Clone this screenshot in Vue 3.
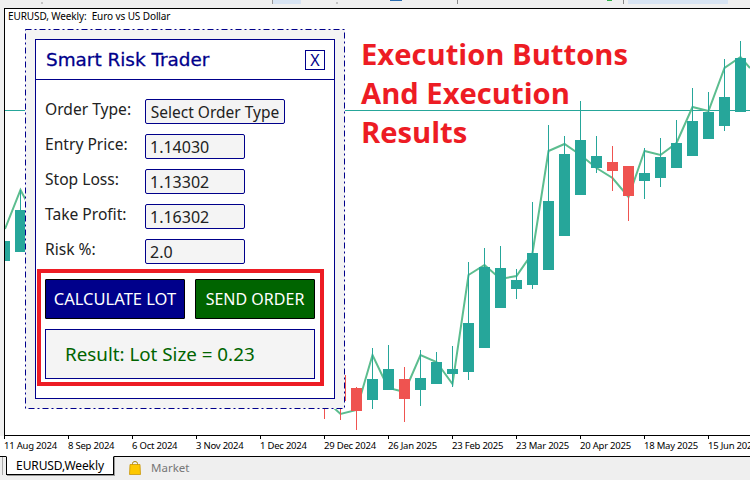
<script setup>
const candles = [
  [20.5, 210, 252, 190, 252, 0], [4.5, 241, 261, 241, 261, 0],
  [324.5, 404, 408, 404, 419, 1], [340.5, 375, 401, 375, 420, 1],
  [356.5, 388, 411, 387, 430, 1], [372.5, 379, 400, 348, 409, 0],
  [388.5, 369, 390, 345, 390, 0], [404.5, 379, 399, 367, 422, 1],
  [420.5, 378, 390, 350, 406, 0], [436.5, 362, 384, 352, 384, 0],
  [452.5, 369, 374, 346, 387, 0], [468.5, 323, 372, 262, 380, 0],
  [484.5, 267, 348, 248, 348, 0], [500.5, 268, 308, 246, 308, 0],
  [516.5, 280, 289, 269, 299, 0], [532.5, 253, 285, 202, 289, 0],
  [548.5, 201, 270, 125, 270, 0], [564.5, 154, 236, 136, 236, 0],
  [580.5, 140, 195, 101, 195, 0], [596.5, 156, 168, 136, 173, 0],
  [612.5, 162, 171, 146, 191, 1], [628.5, 166, 196, 166, 221, 1],
  [644.5, 173, 181, 148, 199, 0], [660.5, 157, 178, 138, 187, 0],
  [676.5, 143, 168, 120, 168, 0], [692.5, 121, 156, 88, 156, 0],
  [708.5, 112, 139, 92, 139, 0], [724.5, 97, 126, 59, 131, 0],
  [740.5, 58, 112, 41, 112, 0]
].map(([x, top, bottom, high, low, down]) => ({ x, top, bottom, high, low, color: down ? '#ef5350' : '#26a69a' }))

const leftLine = '5,229 20.5,190 30,208'
const mainLine = '334,408 340.5,414 356.5,410 372.5,355 382.5,376 388.5,388 404.5,392 420.5,355 436.5,362 452.5,384 468.5,275 484.5,265 500.5,279 516.5,276 532.5,253 548.5,151 564.5,144 580.5,155 596.5,168 612.5,178 628.5,197 644.5,151 660.5,155 676.5,143 692.5,107 708.5,111 724.5,68 740.5,57 750,68'

const dates = ['11 Aug 2024', '8 Sep 2024', '6 Oct 2024', '3 Nov 2024', '1 Dec 2024', '29 Dec 2024', '26 Jan 2025', '23 Feb 2025', '23 Mar 2025', '20 Apr 2025', '18 May 2025', '15 Jun 2025']
const fields = [
  { label: 'Entry Price:', value: '1.14030' },
  { label: 'Stop Loss:', value: '1.13302' },
  { label: 'Take Profit:', value: '1.16302' },
  { label: 'Risk %:', value: '2.0' }
]
</script>

<template>
  <div class="screen">
    <div class="toolbar">
      <span class="grip grip-a"></span>
      <span class="grip grip-b"></span>
      <span class="sel sel-a"></span>
      <span class="sel sel-b"></span>
      <span class="mark mark-blue"></span>
      <span class="mark mark-sep1"></span>
      <span class="mark mark-green"></span>
      <span class="mark mark-sep2"></span>
    </div>

    <div class="chart">
      <svg class="plot" width="750" height="480" viewBox="0 0 750 480">
        <line x1="5" y1="110.5" x2="750" y2="110.5" stroke="#26a69a" stroke-width="1" />
        <polyline :points="leftLine" fill="none" stroke="#5cbd8f" stroke-width="2" />
        <polyline :points="mainLine" fill="none" stroke="#5cbd8f" stroke-width="2" />
        <g v-for="c in candles" :key="c.x">
          <line :x1="c.x" :x2="c.x" :y1="c.high" :y2="c.low" :stroke="c.color" stroke-width="1" />
          <rect :x="c.x - 5.5" :y="c.top" width="11" :height="c.bottom - c.top" :fill="c.color" />
        </g>
      </svg>

      <div class="symbol">EURUSD, Weekly:&nbsp; Euro vs US Dollar</div>

      <div class="annotation">
        <div>Execution Buttons</div>
        <div>And Execution</div>
        <div>Results</div>
      </div>

      <section class="outer">
        <svg class="dash" width="320" height="380" viewBox="0 0 320 380">
          <rect x="0.5" y="0.5" width="319" height="379" fill="none" stroke="#00008b" stroke-width="1" stroke-dasharray="6 3 2 3" />
        </svg>
        <div class="inner">
          <header class="head">
            <span class="title">Smart Risk Trader</span>
            <span class="close">X</span>
          </header>
          <div class="body">
            <div class="row">
              <span class="label">Order Type:</span>
              <span class="select">Select Order Type</span>
            </div>
            <div v-for="f in fields" :key="f.label" class="row">
              <span class="label">{{ f.label }}</span>
              <span class="input">{{ f.value }}</span>
            </div>
            <div class="actions">
              <span class="btn btn-calc">CALCULATE LOT</span>
              <span class="btn btn-send">SEND ORDER</span>
            </div>
            <div class="result">Result: Lot Size = 0.23</div>
          </div>
        </div>
      </section>
      <div class="highlight"></div>
    </div>

    <div class="axis">
      <span v-for="d in dates" :key="d" class="date">{{ d }}</span>
    </div>

    <nav class="tabs">
      <span class="tab">EURUSD,Weekly</span>
      <span class="market">
        <svg width="12" height="14" viewBox="0 0 12 14">
          <path d="M3.5 4 V2.5 A2.5 2 0 0 1 8.5 2.5 V4" fill="none" stroke="#a8860a" stroke-width="1" />
          <path d="M1 3.5 H11 L11.5 13.5 H0.5 Z" fill="#fdc800" stroke="#c8960a" stroke-width="0.8" />
        </svg>
        <span class="market-text">Market</span>
      </span>
    </nav>
  </div>
</template>

<style scoped>
.screen {
  width: 750px;
  height: 480px;
  display: flex;
  flex-direction: column;
  overflow: hidden;
  background: #f0f0f0;
  font-family: "Noto Sans", "DejaVu Sans", sans-serif;
}
.toolbar {
  height: 8px;
  flex: none;
  position: relative;
  background: #f0f0f0;
}
.grip { position: absolute; top: 2px; width: 2px; height: 2px; background: #c4c4c4; }
.grip-a { left: 41px; }
.grip-b { left: 336px; }
.sel { position: absolute; top: 0; height: 4px; background: #d8e4f3; }
.sel-a { left: 272px; width: 28px; border-left: 1px solid #999; }
.sel-b { left: 628px; width: 100px; }
.mark { position: absolute; top: 0; }
.mark-blue { left: 390px; width: 12px; height: 1px; background: #2a6cb0; }
.mark-sep1 { left: 457px; width: 1px; height: 4px; background: #888; }
.mark-green { left: 607px; width: 5px; height: 1px; background: #35b04a; }
.mark-sep2 { left: 623px; width: 1px; height: 4px; background: #888; }

.chart {
  position: relative;
  flex: none;
  height: 428px;
  margin-left: 4px;
  background: #fff;
  border-top: 1px solid #000;
  border-left: 1px solid #000;
  border-bottom: 1px solid #000;
  box-sizing: border-box;
  overflow: hidden;
}
.plot { position: absolute; left: -5px; top: -9px; }
.symbol {
  position: absolute;
  left: 3px;
  top: 0;
  font-size: 10px;
  letter-spacing: -0.1px;
  line-height: 14px;
  color: #000;
  white-space: nowrap;
}
.annotation {
  position: absolute;
  left: 356px;
  top: 26px;
  font-family: "Open Sans", "Noto Sans", sans-serif;
  font-weight: 700;
  font-size: 29.2px;
  line-height: 39px;
  color: #ed1c24;
  white-space: nowrap;
}
.outer {
  position: absolute;
  left: 20px;
  top: 20px;
  width: 320px;
  height: 380px;
  box-sizing: border-box;
  padding: 10px;
  background: #f4f4f4;
}
.dash { position: absolute; left: 0; top: 0; }
.inner {
  position: relative;
  height: 100%;
  box-sizing: border-box;
  background: #fff;
  border: 1px solid #00008b;
  display: flex;
  flex-direction: column;
}
.head {
  height: 40px;
  flex: none;
  box-sizing: border-box;
  border-bottom: 1px solid #00008b;
  display: flex;
  align-items: center;
  justify-content: space-between;
  padding: 0 9px 0 10px;
}
.title {
  font-family: "DejaVu Sans", sans-serif;
  font-size: 18.4px;
  font-weight: 400;
  color: #00008b;
  -webkit-text-stroke: 0.3px #00008b;
}
.close {
  width: 20px;
  height: 20px;
  box-sizing: border-box;
  border: 1px solid #00008b;
  color: #00008b;
  font-size: 16px;
  line-height: 18px;
  text-align: center;
}
.body {
  padding: 19px 9px 0;
  display: flex;
  flex-direction: column;
  gap: 10px;
}
.row { display: flex; height: 25px; }
.label {
  width: 100px;
  font-size: 15.6px;
  line-height: 20px;
  color: #222;
}
.select, .input {
  box-sizing: border-box;
  height: 25px;
  background: #f4f4f4;
  border: 1px solid #00008b;
  border-radius: 2px;
  font-size: 16px;
  line-height: 25px;
  color: #222;
  white-space: nowrap;
}
.select { width: 140px; text-align: center; font-size: 15.5px; }
.input { width: 100px; padding-left: 4px; }
.actions { display: flex; gap: 10px; margin-top: 5px; }
.btn {
  height: 40px;
  box-sizing: border-box;
  border: 1px solid #000;
  border-radius: 1px;
  color: #fff;
  font-size: 16px;
  line-height: 38px;
  text-align: center;
  white-space: nowrap;
}
.btn-calc { width: 140px; background: #00008b; font-size: 16.5px; }
.btn-send { width: 120px; background: #006400; }
.result {
  width: 270px;
  height: 50px;
  box-sizing: border-box;
  background: #f4f4f4;
  border: 1px solid #00008b;
  padding-left: 19px;
  color: #006400;
  font-size: 18.8px;
  line-height: 48px;
  white-space: nowrap;
}
.highlight {
  position: absolute;
  left: 32px;
  top: 260px;
  width: 287px;
  height: 117px;
  box-sizing: border-box;
  border: 4px solid #ed1c24;
}
.axis {
  flex: none;
  height: 21px;
  box-sizing: border-box;
  padding-left: 4px;
  display: grid;
  grid-template-columns: repeat(12, 64px);
  background: #fff;
  border-bottom: 1px solid #000;
}
.date {
  position: relative;
  font-size: 9.5px;
  letter-spacing: -0.22px;
  line-height: 20px;
  color: #000;
  white-space: nowrap;
}
.date::before {
  content: "";
  position: absolute;
  left: 0;
  top: 0;
  width: 1px;
  height: 3px;
  background: #000;
}
.tabs {
  flex: 1;
  display: flex;
  align-items: flex-start;
  padding-left: 2px;
  background: #efefef;
}
.tabs::before {
  content: "";
  width: 1px;
  height: 18px;
  margin-right: 3px;
  background: #aaa;
}
.tab {
  width: 108px;
  height: 19px;
  box-sizing: border-box;
  margin-top: -1px;
  background: #fff;
  border: 1px solid #000;
  border-top-color: #fff;
  box-shadow: 1px 1px 0 #999;
  font-size: 12px;
  letter-spacing: -0.1px;
  line-height: 18px;
  text-align: center;
  color: #000;
}
.market {
  display: flex;
  align-items: center;
  gap: 10px;
  margin-left: 15px;
  margin-top: 3px;
}
.market-text { font-size: 11.5px; color: #777; }
</style>
